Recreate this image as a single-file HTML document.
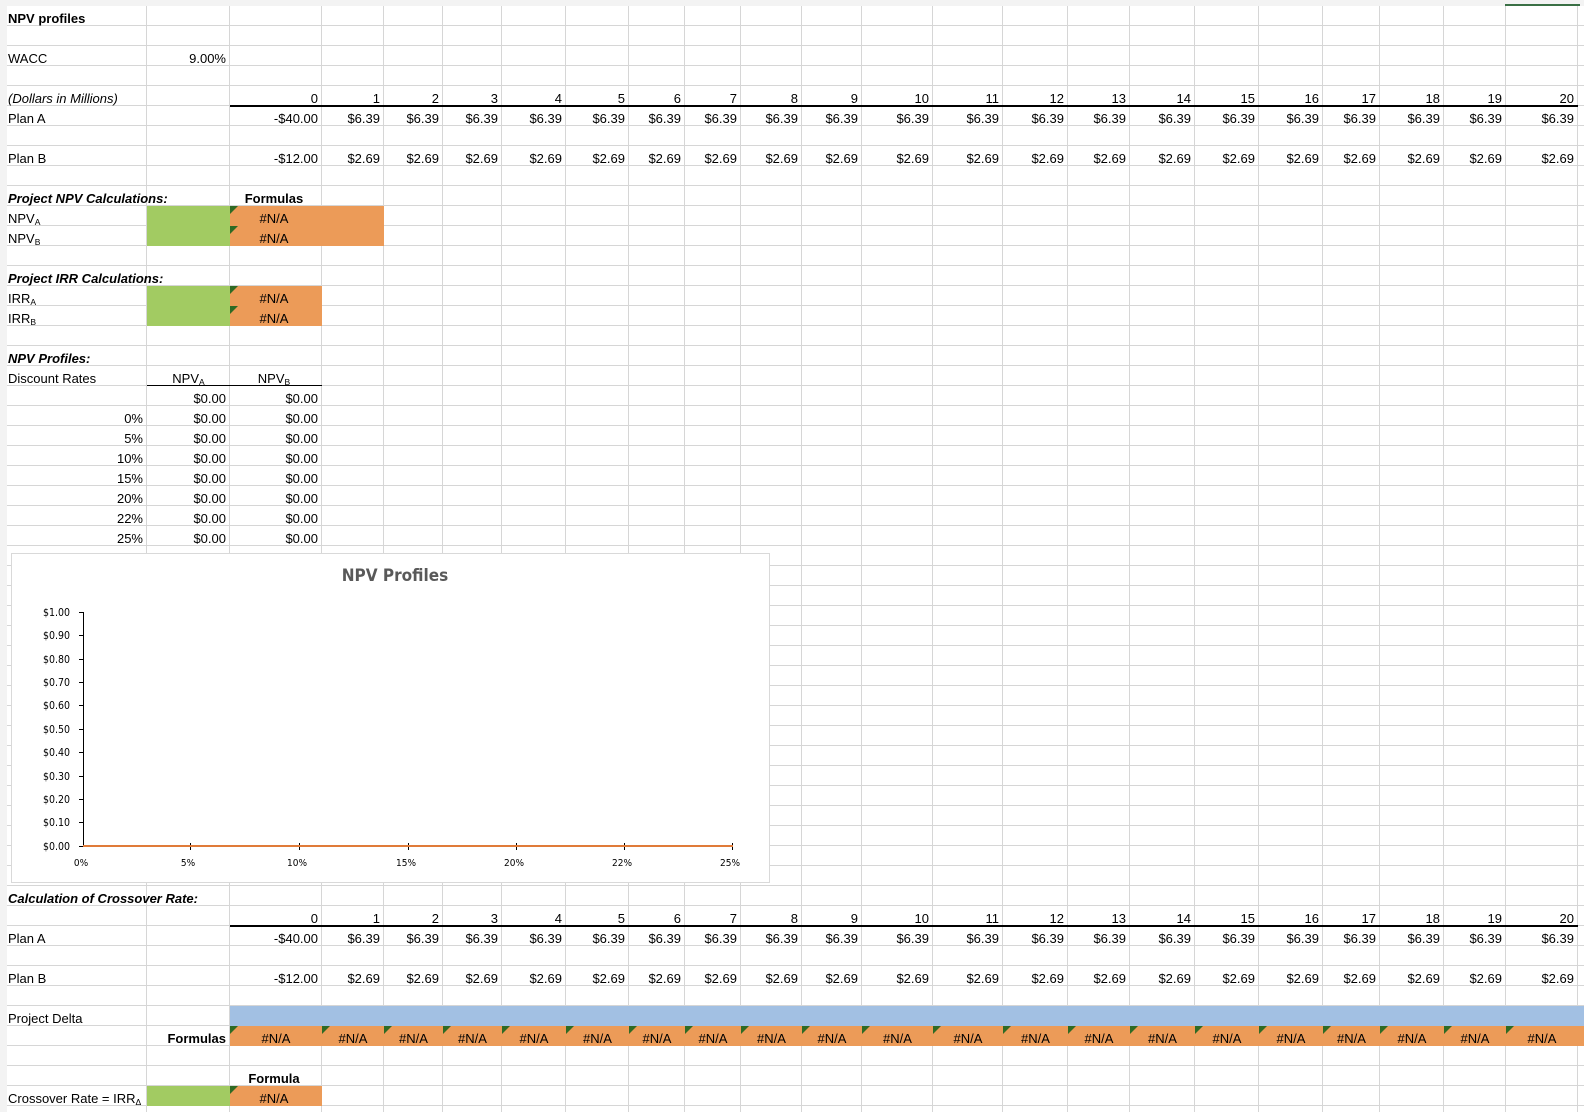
<!DOCTYPE html>
<html><head><meta charset="utf-8"><style>
*{margin:0;padding:0;box-sizing:border-box}
html,body{width:1584px;height:1112px;overflow:hidden;background:#fff;font-family:"Liberation Sans",Arial,sans-serif;font-size:13px;color:#000}
#grid{position:absolute;left:7px;top:6px;width:1577px;height:1106px;background:repeating-linear-gradient(to bottom,transparent 0,transparent 19px,#d6d6d6 19px,#d6d6d6 20px)}
.v{position:absolute;top:6px;height:1106px;width:1px;background:#d6d6d6}
.f{position:absolute}
.t{position:absolute;width:0;height:0;border-top:8px solid #2f6a24;border-right:8px solid transparent}
.row{position:absolute;left:7px;height:20px;display:flex;line-height:20px;padding-top:3px;white-space:nowrap}
.row span{display:block;text-align:right;padding-right:4px;overflow:visible}
.row span:nth-child(1){width:140px}.row span:nth-child(2){width:83px}.row span:nth-child(3){width:92px}
.row span:nth-child(4){width:62px}.row span:nth-child(5){width:59px}.row span:nth-child(6){width:59px}
.row span:nth-child(7){width:64px}.row span:nth-child(8){width:63px}.row span:nth-child(9){width:56px}
.row span:nth-child(10){width:56px}.row span:nth-child(11){width:61px}.row span:nth-child(12){width:60px}
.row span:nth-child(13){width:71px}.row span:nth-child(14){width:70px}.row span:nth-child(15){width:65px}
.row span:nth-child(16){width:62px}.row span:nth-child(17){width:65px}.row span:nth-child(18){width:64px}
.row span:nth-child(19){width:64px}.row span:nth-child(20){width:57px}.row span:nth-child(21){width:64px}
.row span:nth-child(22){width:62px}.row span:nth-child(23){width:72px}
.row span.c{text-align:center;padding-right:0}
.lab{position:absolute;left:8px;line-height:20px;padding-top:3px;height:23px;white-space:nowrap}
.b{font-weight:bold}.i{font-style:italic}
sub{font-size:8.5px;vertical-align:-2px}
.na{position:absolute;height:20px;line-height:20px;padding-top:3px;text-align:center}
</style></head><body>
<div style="position:absolute;left:0;top:0;width:1584px;height:6px;background:#f3f3f3"></div>
<div style="position:absolute;left:0;top:0;width:7px;height:1112px;background:#f3f3f3"></div>
<div style="position:absolute;left:1505px;top:4px;width:75px;height:2px;background:#3a7045"></div>
<div id="grid"></div>
<div class="v" style="left:146px"></div><div class="v" style="left:229px"></div><div class="v" style="left:321px"></div>
<div class="v" style="left:383px"></div><div class="v" style="left:442px"></div><div class="v" style="left:501px"></div>
<div class="v" style="left:565px"></div><div class="v" style="left:628px"></div><div class="v" style="left:684px"></div>
<div class="v" style="left:740px"></div><div class="v" style="left:801px"></div><div class="v" style="left:861px"></div>
<div class="v" style="left:932px"></div><div class="v" style="left:1002px"></div><div class="v" style="left:1067px"></div>
<div class="v" style="left:1129px"></div><div class="v" style="left:1194px"></div><div class="v" style="left:1258px"></div>
<div class="v" style="left:1322px"></div><div class="v" style="left:1379px"></div><div class="v" style="left:1443px"></div>
<div class="v" style="left:1505px"></div><div class="v" style="left:1577px"></div>

<div class="f" style="left:147px;top:206px;width:83px;height:40px;background:#a2cb62"></div>
<div class="f" style="left:230px;top:206px;width:154px;height:40px;background:#ec9b58"></div>
<div class="f" style="left:147px;top:286px;width:83px;height:40px;background:#a2cb62"></div>
<div class="f" style="left:230px;top:286px;width:92px;height:40px;background:#ec9b58"></div>
<div class="f" style="left:230px;top:1006px;width:1354px;height:20px;background:#a2c0e3"></div>
<div class="f" style="left:230px;top:1026px;width:1354px;height:20px;background:#ec9b58"></div>
<div class="f" style="left:147px;top:1086px;width:83px;height:20px;background:#a2cb62"></div>
<div class="f" style="left:230px;top:1086px;width:92px;height:20px;background:#ec9b58"></div>
<div class="f" style="left:230px;top:105px;width:1348px;height:2px;background:#000"></div>
<div class="f" style="left:230px;top:925px;width:1348px;height:2px;background:#000"></div>
<div class="f" style="left:147px;top:385px;width:175px;height:1px;background:#000"></div>

<div class="t" style="left:230px;top:206px"></div><div class="t" style="left:230px;top:226px"></div>
<div class="t" style="left:230px;top:286px"></div><div class="t" style="left:230px;top:306px"></div>
<div class="t" style="left:230px;top:1086px"></div>
<div class="t" style="left:230px;top:1026px"></div><div class="t" style="left:322px;top:1026px"></div>
<div class="t" style="left:384px;top:1026px"></div><div class="t" style="left:443px;top:1026px"></div>
<div class="t" style="left:502px;top:1026px"></div><div class="t" style="left:566px;top:1026px"></div>
<div class="t" style="left:629px;top:1026px"></div><div class="t" style="left:685px;top:1026px"></div>
<div class="t" style="left:741px;top:1026px"></div><div class="t" style="left:802px;top:1026px"></div>
<div class="t" style="left:862px;top:1026px"></div><div class="t" style="left:933px;top:1026px"></div>
<div class="t" style="left:1003px;top:1026px"></div><div class="t" style="left:1068px;top:1026px"></div>
<div class="t" style="left:1130px;top:1026px"></div><div class="t" style="left:1195px;top:1026px"></div>
<div class="t" style="left:1259px;top:1026px"></div><div class="t" style="left:1323px;top:1026px"></div>
<div class="t" style="left:1380px;top:1026px"></div><div class="t" style="left:1444px;top:1026px"></div>
<div class="t" style="left:1506px;top:1026px"></div>

<div class="lab b" style="top:6px">NPV profiles</div>
<div class="lab" style="top:46px">WACC</div>
<div class="row" style="top:46px"><span></span><span>9.00%</span></div>
<div class="lab i" style="top:86px">(Dollars in Millions)</div>
<div class="row" style="top:86px"><span></span><span></span><span>0</span><span>1</span><span>2</span><span>3</span><span>4</span><span>5</span><span>6</span><span>7</span><span>8</span><span>9</span><span>10</span><span>11</span><span>12</span><span>13</span><span>14</span><span>15</span><span>16</span><span>17</span><span>18</span><span>19</span><span>20</span></div>
<div class="lab" style="top:106px">Plan A</div>
<div class="row" style="top:106px"><span></span><span></span><span>-$40.00</span><span>$6.39</span><span>$6.39</span><span>$6.39</span><span>$6.39</span><span>$6.39</span><span>$6.39</span><span>$6.39</span><span>$6.39</span><span>$6.39</span><span>$6.39</span><span>$6.39</span><span>$6.39</span><span>$6.39</span><span>$6.39</span><span>$6.39</span><span>$6.39</span><span>$6.39</span><span>$6.39</span><span>$6.39</span><span>$6.39</span></div>
<div class="lab" style="top:146px">Plan B</div>
<div class="row" style="top:146px"><span></span><span></span><span>-$12.00</span><span>$2.69</span><span>$2.69</span><span>$2.69</span><span>$2.69</span><span>$2.69</span><span>$2.69</span><span>$2.69</span><span>$2.69</span><span>$2.69</span><span>$2.69</span><span>$2.69</span><span>$2.69</span><span>$2.69</span><span>$2.69</span><span>$2.69</span><span>$2.69</span><span>$2.69</span><span>$2.69</span><span>$2.69</span><span>$2.69</span></div>

<div class="lab b i" style="top:186px">Project NPV Calculations:</div>
<div class="na b" style="left:230px;top:186px;width:88px">Formulas</div>
<div class="lab" style="top:206px">NPV<sub>A</sub></div>
<div class="lab" style="top:226px">NPV<sub>B</sub></div>
<div class="na" style="left:230px;top:206px;width:88px">#N/A</div>
<div class="na" style="left:230px;top:226px;width:88px">#N/A</div>

<div class="lab b i" style="top:266px">Project IRR Calculations:</div>
<div class="lab" style="top:286px">IRR<sub>A</sub></div>
<div class="lab" style="top:306px">IRR<sub>B</sub></div>
<div class="na" style="left:230px;top:286px;width:88px">#N/A</div>
<div class="na" style="left:230px;top:306px;width:88px">#N/A</div>

<div class="lab b i" style="top:346px">NPV Profiles:</div>
<div class="lab" style="top:366px">Discount Rates</div>
<div class="na" style="left:147px;top:366px;width:83px">NPV<sub>A</sub></div>
<div class="na" style="left:230px;top:366px;width:88px">NPV<sub>B</sub></div>
<div class="row" style="top:386px"><span></span><span>$0.00</span><span>$0.00</span></div>
<div class="row" style="top:406px"><span>0%</span><span>$0.00</span><span>$0.00</span></div>
<div class="row" style="top:426px"><span>5%</span><span>$0.00</span><span>$0.00</span></div>
<div class="row" style="top:446px"><span>10%</span><span>$0.00</span><span>$0.00</span></div>
<div class="row" style="top:466px"><span>15%</span><span>$0.00</span><span>$0.00</span></div>
<div class="row" style="top:486px"><span>20%</span><span>$0.00</span><span>$0.00</span></div>
<div class="row" style="top:506px"><span>22%</span><span>$0.00</span><span>$0.00</span></div>
<div class="row" style="top:526px"><span>25%</span><span>$0.00</span><span>$0.00</span></div>

<svg style="position:absolute;left:11px;top:553px" width="759" height="330" viewBox="0 0 759 330">
<rect x="0.5" y="0.5" width="758" height="329" fill="#fff" stroke="#d9d9d9"/>
<text x="384" y="28" text-anchor="middle" font-family="DejaVu Sans Condensed,Liberation Sans,sans-serif" font-weight="bold" font-size="17" fill="#595959">NPV Profiles</text>
<g font-family="DejaVu Sans Condensed,Liberation Sans,sans-serif" font-size="10.5" fill="#000" text-anchor="end">
<text x="59" y="63">$1.00</text><text x="59" y="86">$0.90</text><text x="59" y="110">$0.80</text><text x="59" y="133">$0.70</text><text x="59" y="156">$0.60</text><text x="59" y="180">$0.50</text><text x="59" y="203">$0.40</text><text x="59" y="227">$0.30</text><text x="59" y="250">$0.20</text><text x="59" y="273">$0.10</text><text x="59" y="297">$0.00</text>
</g>
<g font-family="DejaVu Sans Condensed,Liberation Sans,sans-serif" font-size="10" text-anchor="middle">
<text x="70" y="313">0%</text><text x="177" y="313">5%</text><text x="286" y="313">10%</text><text x="395" y="313">15%</text><text x="503" y="313">20%</text><text x="611" y="313">22%</text><text x="719" y="313">25%</text>
</g>
<g stroke="#000" stroke-width="1">
<line x1="72.5" y1="59" x2="72.5" y2="294"/>
<line x1="68" y1="59.5" x2="72" y2="59.5"/><line x1="68" y1="82.5" x2="72" y2="82.5"/><line x1="68" y1="106.5" x2="72" y2="106.5"/><line x1="68" y1="129.5" x2="72" y2="129.5"/><line x1="68" y1="152.5" x2="72" y2="152.5"/><line x1="68" y1="176.5" x2="72" y2="176.5"/><line x1="68" y1="199.5" x2="72" y2="199.5"/><line x1="68" y1="223.5" x2="72" y2="223.5"/><line x1="68" y1="246.5" x2="72" y2="246.5"/><line x1="68" y1="269.5" x2="72" y2="269.5"/><line x1="68" y1="293.5" x2="72" y2="293.5"/>
<line x1="179.5" y1="290" x2="179.5" y2="297"/><line x1="288.5" y1="290" x2="288.5" y2="297"/><line x1="397.5" y1="290" x2="397.5" y2="297"/><line x1="505.5" y1="290" x2="505.5" y2="297"/><line x1="613.5" y1="290" x2="613.5" y2="297"/><line x1="721.5" y1="290" x2="721.5" y2="297"/>
</g>
<line x1="72" y1="293" x2="722" y2="293" stroke="#e07b39" stroke-width="2"/>
</svg>

<div class="lab b i" style="top:886px">Calculation of Crossover Rate:</div>
<div class="row" style="top:906px"><span></span><span></span><span>0</span><span>1</span><span>2</span><span>3</span><span>4</span><span>5</span><span>6</span><span>7</span><span>8</span><span>9</span><span>10</span><span>11</span><span>12</span><span>13</span><span>14</span><span>15</span><span>16</span><span>17</span><span>18</span><span>19</span><span>20</span></div>
<div class="lab" style="top:926px">Plan A</div>
<div class="row" style="top:926px"><span></span><span></span><span>-$40.00</span><span>$6.39</span><span>$6.39</span><span>$6.39</span><span>$6.39</span><span>$6.39</span><span>$6.39</span><span>$6.39</span><span>$6.39</span><span>$6.39</span><span>$6.39</span><span>$6.39</span><span>$6.39</span><span>$6.39</span><span>$6.39</span><span>$6.39</span><span>$6.39</span><span>$6.39</span><span>$6.39</span><span>$6.39</span><span>$6.39</span></div>
<div class="lab" style="top:966px">Plan B</div>
<div class="row" style="top:966px"><span></span><span></span><span>-$12.00</span><span>$2.69</span><span>$2.69</span><span>$2.69</span><span>$2.69</span><span>$2.69</span><span>$2.69</span><span>$2.69</span><span>$2.69</span><span>$2.69</span><span>$2.69</span><span>$2.69</span><span>$2.69</span><span>$2.69</span><span>$2.69</span><span>$2.69</span><span>$2.69</span><span>$2.69</span><span>$2.69</span><span>$2.69</span><span>$2.69</span></div>
<div class="lab" style="top:1006px">Project Delta</div>
<div class="row" style="top:1026px"><span></span><span class="b">Formulas</span><span class="c">#N/A</span><span class="c">#N/A</span><span class="c">#N/A</span><span class="c">#N/A</span><span class="c">#N/A</span><span class="c">#N/A</span><span class="c">#N/A</span><span class="c">#N/A</span><span class="c">#N/A</span><span class="c">#N/A</span><span class="c">#N/A</span><span class="c">#N/A</span><span class="c">#N/A</span><span class="c">#N/A</span><span class="c">#N/A</span><span class="c">#N/A</span><span class="c">#N/A</span><span class="c">#N/A</span><span class="c">#N/A</span><span class="c">#N/A</span><span class="c">#N/A</span></div>
<div class="na b" style="left:230px;top:1066px;width:88px">Formula</div>
<div class="lab" style="top:1086px">Crossover Rate = IRR<sub>Δ</sub></div>
<div class="na" style="left:230px;top:1086px;width:88px">#N/A</div>
</body></html>
